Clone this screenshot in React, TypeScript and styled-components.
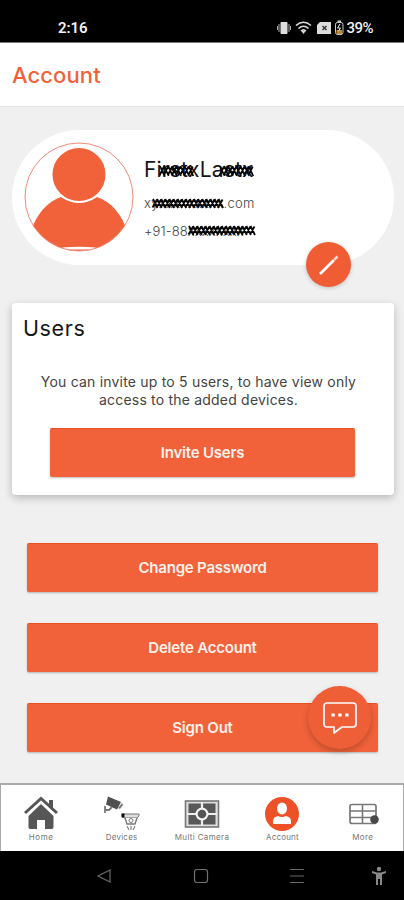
import React from "react";
import styled, { createGlobalStyle } from "styled-components";

const ORANGE = "#f1623a";

const GlobalStyle = createGlobalStyle`
  * { box-sizing: border-box; }
  html, body { margin: 0; padding: 0; }
  body { font-family: Inter, Roboto, sans-serif; background: #f0f0f0; }
  button { font: inherit; border: 0; padding: 0; }
  svg { display: block; flex: none; }
`;

const Screen = styled.div`
  width: 404px;
  height: 900px;
  display: flex;
  flex-direction: column;
  overflow: hidden;
  background: #f0f0f0;
`;

const StatusBar = styled.div`
  height: 43px;
  flex: none;
  padding: 14px 31px 0 58px;
  display: flex;
  justify-content: space-between;
  align-items: center;
  background: #000;
  color: #f2f2f2;
  border-bottom: 1px solid #777;
`;

const Clock = styled.span`
  font: 600 15px/18px Roboto, sans-serif;
  letter-spacing: -0.1px;
`;

const StatusIcons = styled.div`
  display: flex;
  align-items: center;
`;

const Battery = styled.span`
  font: 500 15px/18px Roboto, sans-serif;
  letter-spacing: -0.5px;
`;

const Header = styled.header`
  height: 64px;
  flex: none;
  display: flex;
  align-items: center;
  padding: 1px 12px 0;
  background: #fff;
  border-bottom: 1px solid #e2e2e2;
`;

const Title = styled.h1`
  margin: 0;
  color: ${ORANGE};
  font-size: 22px;
  line-height: 28px;
  font-weight: 500;
  letter-spacing: 0.1px;
`;

const Content = styled.main`
  flex: 1;
  min-height: 0;
  padding: 23px 10px 0 12px;
`;

const Profile = styled.section`
  position: relative;
  width: 382px;
  height: 135px;
  padding: 12px;
  border-radius: 68px;
  background: #fff;
  display: flex;
  align-items: flex-start;
`;

const Details = styled.div`
  position: relative;
  margin-left: 10px;
  padding-top: 14px;
`;

const Name = styled.div`
  font-size: 21px;
  line-height: 28px;
  color: #151515;
  letter-spacing: 0.15px;
  white-space: nowrap;
`;

const Contact = styled.div<{ $spacing: number }>`
  margin-top: 10px;
  position: static;
  font-size: 13px;
  line-height: 18px;
  font-weight: 300;
  color: #444;
  letter-spacing: ${(p) => p.$spacing}px;
  white-space: nowrap;
`;

const Redaction = styled.svg`
  position: absolute;
  left: 0;
  top: 0;
`;

const EditButton = styled.button`
  position: absolute;
  left: 294px;
  top: 112px;
  width: 45px;
  height: 45px;
  border-radius: 50%;
  background: #f05c33;
  display: grid;
  place-items: center;
  box-shadow: 0 1px 4px rgba(0, 0, 0, 0.2);
`;

const Card = styled.section`
  width: 382px;
  height: 192px;
  margin-top: 38px;
  padding: 10px 11px;
  border-radius: 4px;
  background: #fff;
  box-shadow: 0 3px 8px rgba(0, 0, 0, 0.24);
  display: flex;
  flex-direction: column;
`;

const CardTitle = styled.h2`
  margin: 0;
  font-size: 21.5px;
  line-height: 30px;
  font-weight: 400;
  color: #161616;
  letter-spacing: 0.6px;
`;

const Note = styled.p`
  margin: 30px 9px 0 0;
  color: #444;
  font-size: 14px;
  line-height: 18px;
  letter-spacing: 0.2px;
  text-align: center;
  white-space: nowrap;
`;

const Action = styled.button<{ $width: number }>`
  width: ${(p) => p.$width}px;
  height: 49px;
  flex: none;
  padding-bottom: 2px;
  border-radius: 2px;
  background: ${ORANGE};
  color: #fff1eb;
  font-size: 15px;
  font-weight: 600;
  letter-spacing: -0.2px;
  border-top: 1px solid #e9511f;
  box-shadow: 0 1px 2px rgba(0, 0, 0, 0.25);
`;

const InviteRow = styled.div`
  padding: 19px 0 0 27px;
`;

const Actions = styled.div`
  margin: 48px 0 0 15px;
  display: flex;
  flex-direction: column;
  gap: 31px;
`;

const ChatButton = styled.button`
  position: absolute;
  left: 308px;
  top: 686px;
  width: 63px;
  height: 63px;
  border-radius: 50%;
  background: #ee5f37;
  display: grid;
  place-items: center;
  box-shadow: 0 3px 6px rgba(0, 0, 0, 0.22);
`;

const TabBar = styled.nav`
  height: 68px;
  flex: none;
  display: grid;
  grid-template-columns: repeat(5, 1fr);
  background: #fff;
  border: 1px solid #aaa;
  border-top-width: 2px;
  border-bottom: 0;
`;

const Tab = styled.div`
  display: flex;
  flex-direction: column;
  align-items: center;
  padding-top: 11px;
`;

const TabLabel = styled.span<{ $spacing: number }>`
  font-size: 8px;
  line-height: 10px;
  color: #777;
  letter-spacing: ${(p) => p.$spacing}px;
  white-space: nowrap;
`;

const SystemBar = styled.div`
  height: 49px;
  flex: none;
  padding-left: 96px;
  display: grid;
  grid-template-columns: 97px 96px 82px 16px;
  align-items: center;
  background: #000;
`;

/* Dense zig-zag hatch that hides private characters. */
const hatch = (x: number, y: number, w: number, h: number) => {
  let d = "";
  for (let i = 0; i < w - 3; i += 4.1) {
    d += `M${x + i} ${y}l4.500 ${h}M${x + i + 4} ${y + 0.5}l-4.500 ${h - 1}`;
  }
  return d;
};

const AvatarIcon = () => (
  <svg width="110" height="110" viewBox="0 0 110 110">
    <defs>
      <clipPath id="avatar">
        <circle cx="55" cy="55" r="54" />
      </clipPath>
    </defs>
    <g clipPath="url(#avatar)" fill={ORANGE}>
      <path d="M6 92C12 72 24 59 37 55C49 63 61 63 73 55C88 60 98 73 104 91V110H6Z" />
      <circle cx="55" cy="32.500" r="26.500" />
      <path d="M38 105.500Q55 104 72 105.500L69 107.500H41Z" fill="#fff" />
    </g>
    <circle cx="55" cy="55" r="54" fill="none" stroke="#f38a78" strokeWidth="1" />
  </svg>
);

const HomeIcon = () => (
  <svg width="34" height="36" viewBox="0 0 34 36" fill="#565656">
    <path d="M4.500 20L17 8L29.500 20V31Q29.500 33 28 33H21V24H13V33H6Q4.500 33 4.500 31Z" />
    <path d="M1 18.500L17 3.500L33 18.500" fill="none" stroke="#fff" strokeWidth="5" />
    <path d="M25 4h4v11l-4-4Z" />
    <path d="M1 17L17 2.500L33 17" fill="none" stroke="#565656" strokeWidth="3" />
  </svg>
);

const DevicesIcon = () => (
  <svg width="36" height="36" viewBox="0 0 36 36" fill="#505050">
    <path d="M4 0.500L17 6L13 13.500L2 8.500Z" />
    <path d="M14 12l4-5 1 2-3 4Z" fill="#777" />
    <path d="M1 10v7M1 14h4l3-3" fill="none" stroke="#777" strokeWidth="1.800" />
    <path d="M18 18H35V20L33 22H20L18 20Z" fill="#ddd" stroke="#777" />
    <path d="M17.500 17.500h3v4h-3Z" fill="#111" />
    <path d="M21 22l2 6h8l2-6" fill="#fff" stroke="#777" strokeWidth="1.400" />
    <circle cx="27" cy="24.500" r="2" fill="none" stroke="#777" />
    <path d="M23 30l2 4M27 30v4M31 30l-2 4" fill="none" stroke="#888" strokeWidth="1.200" />
  </svg>
);

const MultiIcon = () => (
  <svg width="36" height="36" viewBox="0 0 36 36">
    <rect x="1.500" y="5" width="33" height="26" fill="#ddd" stroke="#777" strokeWidth="1.600" />
    <rect x="4.500" y="7.500" width="27" height="21" fill="#585858" />
    <path d="M18 6V30M3 18H33" stroke="#eee" strokeWidth="2.200" />
    <circle cx="18" cy="18" r="6.500" fill="#f3f3f3" />
    <circle cx="18" cy="18" r="4.300" fill="#555" />
  </svg>
);

const AccountIcon = () => (
  <svg width="36" height="36" viewBox="0 0 36 36">
    <circle cx="18" cy="18" r="17" fill="#ee5128" />
    <ellipse cx="18" cy="12.500" rx="5" ry="6" fill="#fff" />
    <path d="M9 28V25Q9 21 14 20Q18 22 22 20Q27 21 27 25V28Z" fill="#fff" />
  </svg>
);

const MoreIcon = () => (
  <svg width="34" height="36" viewBox="0 0 34 36" fill="none">
    <rect x="4" y="8.500" width="26" height="19" rx="2" stroke="#777" strokeWidth="1.700" />
    <path d="M4 15H30M4 21.500H30M16.500 9V28" stroke="#777" strokeWidth="1.600" />
    <circle cx="28.500" cy="23.500" r="4.300" fill="#484848" />
  </svg>
);

const StatusGlyphs = () => (
  <svg width="69" height="18" viewBox="0 0 69 18" fill="none">
    <rect x="3.500" y="3" width="7" height="12" rx="1" fill="#ddd" />
    <path d="M2 5v8M12 5v8M.5 7v4M13.500 7v4" stroke="#aaa" strokeWidth="1" />
    <path d="M19 6.500Q26.500 0 34 6.500M21.500 9.500Q26.500 5 31.500 9.500M24 12Q26.500 9.500 29 12" stroke="#ddd" strokeWidth="1.600" />
    <path d="M24 11.500h5L26.500 15Z" fill="#ddd" />
    <path d="M43 3h11v12H40V6Z" fill="#ddd" />
    <path d="M45.500 7l4 4m0-4l-4 4" stroke="#333" strokeWidth="1.400" />
    <rect x="58.500" y="3.500" width="7.500" height="12" rx="2" stroke="#ccc" />
    <path d="M60.500 1.500h3.500v2h-3.500Z" fill="#ccc" />
    <path d="M59.500 11h5.500v4h-5.500Z" fill="#c28a2c" />
    <path d="M63 5l-2.500 4h3l-2 3" stroke="#eee" />
  </svg>
);

const tabs = [
  { label: "Home", icon: <HomeIcon />, spacing: 0.6 },
  { label: "Devices", icon: <DevicesIcon />, spacing: 0.25 },
  { label: "Multi Camera", icon: <MultiIcon />, spacing: 0.35 },
  { label: "Account", icon: <AccountIcon />, spacing: 0.2 },
  { label: "More", icon: <MoreIcon />, spacing: 0.4 },
];

export default function App() {
  return (
    <Screen>
      <GlobalStyle />
      <StatusBar>
        <Clock>2:16</Clock>
        <StatusIcons>
          <StatusGlyphs />
          <Battery>39%</Battery>
        </StatusIcons>
      </StatusBar>
      <Header>
        <Title>Account</Title>
      </Header>
      <Content>
        <Profile>
          <AvatarIcon />
          <Details>
            <Name>FirstxLastx</Name>
            <Contact $spacing={0.3}>xyxxxxxxxxx.com</Contact>
            <Contact $spacing={0.1}>+91-88xxxxxxxx</Contact>
            <Redaction width="120" height="112" viewBox="0 0 120 112">
              <path
                d={hatch(16, 24, 34, 10) + hatch(76, 24, 33, 10) + hatch(9, 57, 70, 9) + hatch(45, 84, 66, 9)}
                fill="none"
                stroke="#080808"
                strokeWidth="1.800"
              />
            </Redaction>
          </Details>
          <EditButton aria-label="Edit profile">
            <svg width="22" height="22" viewBox="0 0 22 22" fill="none" stroke="#fff">
              <path d="M2 20L16 6" strokeWidth="2.600" />
              <path d="M16.300 5.700L19.500 2.500" strokeWidth="2.600" stroke="#ffd9cc" />
            </svg>
          </EditButton>
        </Profile>
        <Card>
          <CardTitle>Users</CardTitle>
          <Note>
            You can invite up to 5 users, to have view only
            <br />
            access to the added devices.
          </Note>
          <InviteRow>
            <Action $width={305}>Invite Users</Action>
          </InviteRow>
        </Card>
        <Actions>
          <Action $width={351}>Change Password</Action>
          <Action $width={351}>Delete Account</Action>
          <Action $width={351}>Sign Out</Action>
        </Actions>
      </Content>
      <ChatButton aria-label="Chat">
        <svg width="34" height="34" viewBox="0 0 34 34" fill="none">
          <path d="M4 2H30Q33 2 33 5V23Q33 26 30 26H19L11 32V26H4Q1 26 1 23V5Q1 2 4 2Z" stroke="#fff" strokeWidth="1.700" strokeLinejoin="round" />
          <path d="M8.500 14h3.300M15.300 14h3.300M22.200 14h3.300" stroke="#fff" strokeWidth="3" />
        </svg>
      </ChatButton>
      <TabBar>
        {tabs.map((t) => (
          <Tab key={t.label}>
            {t.icon}
            <TabLabel $spacing={t.spacing}>{t.label}</TabLabel>
          </Tab>
        ))}
      </TabBar>
      <SystemBar>
        <svg width="16" height="16" viewBox="0 0 16 16" fill="none" stroke="#666">
          <path d="M14 2V14L2 8Z" strokeWidth="1.200" />
        </svg>
        <svg width="16" height="16" viewBox="0 0 16 16" fill="none" stroke="#707070">
          <rect x="1.500" y="1.500" width="13" height="13" rx="2.500" strokeWidth="1.200" />
        </svg>
        <svg width="16" height="16" viewBox="0 0 16 16" stroke="#666">
          <path d="M1 1.500H15M1 8H15M1 14.500H15" strokeWidth="1.200" />
        </svg>
        <svg width="16" height="20" viewBox="0 0 16 20" fill="#888">
          <circle cx="8" cy="3" r="2.200" />
          <path d="M1 5L6 6.500H10L15 5V7L11 8.500V19H9V13H7V19H5V8.500L1 7Z" />
        </svg>
      </SystemBar>
    </Screen>
  );
}
